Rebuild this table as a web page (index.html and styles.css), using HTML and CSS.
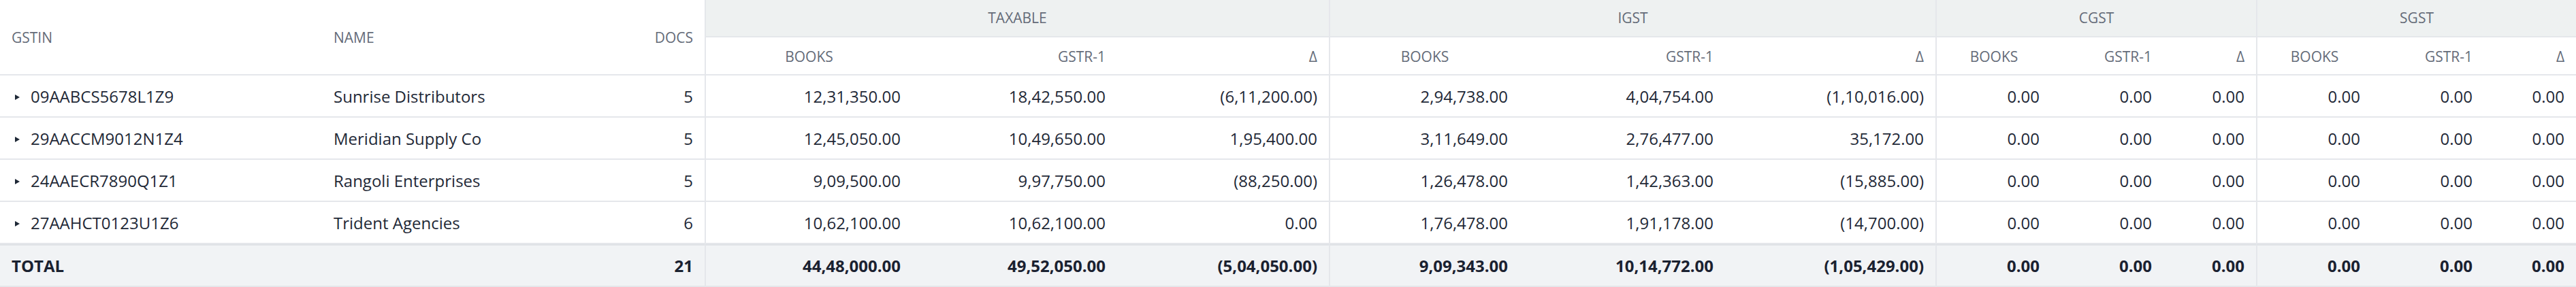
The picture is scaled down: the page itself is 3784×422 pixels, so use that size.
FILE: index.html
```html
<!DOCTYPE html>
<html lang="en">
<head>
<meta charset="utf-8">
<title>GSTR-1 Reconciliation</title>
<link rel="stylesheet" href="styles.css">
</head>
<body>
<table class="recon">
  <colgroup>
    <col class="w-gstin">
    <col class="w-name">
    <col class="w-docs">
    <col class="w-tx1"><col class="w-tx2"><col class="w-tx3">
    <col class="w-ig1"><col class="w-ig2"><col class="w-ig3">
    <col class="w-cg1"><col class="w-cg2"><col class="w-cg3">
    <col class="w-sg1"><col class="w-sg2"><col class="w-sg3">
  </colgroup>
  <thead>
    <tr class="grp-row">
      <th rowspan="2" class="hd left">GSTIN</th>
      <th rowspan="2" class="hd left">NAME</th>
      <th rowspan="2" class="hd right">DOCS</th>
      <th colspan="3" class="grp gs">TAXABLE</th>
      <th colspan="3" class="grp gs">IGST</th>
      <th colspan="3" class="grp gs">CGST</th>
      <th colspan="3" class="grp gs">SGST</th>
    </tr>
    <tr class="sub-row">
      <th class="sub center gs">BOOKS</th><th class="sub right">GSTR-1</th><th class="sub right">Δ</th>
      <th class="sub center gs">BOOKS</th><th class="sub right">GSTR-1</th><th class="sub right">Δ</th>
      <th class="sub center gs">BOOKS</th><th class="sub right">GSTR-1</th><th class="sub right">Δ</th>
      <th class="sub center gs">BOOKS</th><th class="sub right">GSTR-1</th><th class="sub right">Δ</th>
    </tr>
  </thead>
  <tbody>
    <tr>
      <td class="left"><span class="caret"></span>09AABCS5678L1Z9</td>
      <td class="left">Sunrise Distributors</td>
      <td class="right">5</td>
      <td class="right gs">12,31,350.00</td><td class="right">18,42,550.00</td><td class="right">(6,11,200.00)</td>
      <td class="right gs">2,94,738.00</td><td class="right">4,04,754.00</td><td class="right">(1,10,016.00)</td>
      <td class="right gs">0.00</td><td class="right">0.00</td><td class="right">0.00</td>
      <td class="right gs">0.00</td><td class="right">0.00</td><td class="right">0.00</td>
    </tr>
    <tr>
      <td class="left"><span class="caret"></span>29AACCM9012N1Z4</td>
      <td class="left">Meridian Supply Co</td>
      <td class="right">5</td>
      <td class="right gs">12,45,050.00</td><td class="right">10,49,650.00</td><td class="right">1,95,400.00</td>
      <td class="right gs">3,11,649.00</td><td class="right">2,76,477.00</td><td class="right">35,172.00</td>
      <td class="right gs">0.00</td><td class="right">0.00</td><td class="right">0.00</td>
      <td class="right gs">0.00</td><td class="right">0.00</td><td class="right">0.00</td>
    </tr>
    <tr>
      <td class="left"><span class="caret"></span>24AAECR7890Q1Z1</td>
      <td class="left">Rangoli Enterprises</td>
      <td class="right">5</td>
      <td class="right gs">9,09,500.00</td><td class="right">9,97,750.00</td><td class="right">(88,250.00)</td>
      <td class="right gs">1,26,478.00</td><td class="right">1,42,363.00</td><td class="right">(15,885.00)</td>
      <td class="right gs">0.00</td><td class="right">0.00</td><td class="right">0.00</td>
      <td class="right gs">0.00</td><td class="right">0.00</td><td class="right">0.00</td>
    </tr>
    <tr>
      <td class="left"><span class="caret"></span>27AAHCT0123U1Z6</td>
      <td class="left">Trident Agencies</td>
      <td class="right">6</td>
      <td class="right gs">10,62,100.00</td><td class="right">10,62,100.00</td><td class="right">0.00</td>
      <td class="right gs">1,76,478.00</td><td class="right">1,91,178.00</td><td class="right">(14,700.00)</td>
      <td class="right gs">0.00</td><td class="right">0.00</td><td class="right">0.00</td>
      <td class="right gs">0.00</td><td class="right">0.00</td><td class="right">0.00</td>
    </tr>
  </tbody>
  <tfoot>
    <tr class="total">
      <td class="left">TOTAL</td>
      <td class="left"></td>
      <td class="right">21</td>
      <td class="right gs">44,48,000.00</td><td class="right">49,52,050.00</td><td class="right">(5,04,050.00)</td>
      <td class="right gs">9,09,343.00</td><td class="right">10,14,772.00</td><td class="right">(1,05,429.00)</td>
      <td class="right gs">0.00</td><td class="right">0.00</td><td class="right">0.00</td>
      <td class="right gs">0.00</td><td class="right">0.00</td><td class="right">0.00</td>
    </tr>
  </tfoot>
</table>
</body>
</html>
```

FILE: styles.css
```css
* { box-sizing: border-box; }

html, body {
  margin: 0;
  padding: 0;
  background: #ffffff;
}

body {
  font-family: "Open Sans", "Noto Sans", sans-serif;
  color: #1f2937;
}

.recon {
  width: 3784px;
  table-layout: fixed;
  border-collapse: separate;
  border-spacing: 0;
}

.w-gstin { width: 473px; }
.w-name { width: 427px; }
.w-docs { width: 135px; }
.w-tx1 { width: 305px; }
.w-tx2 { width: 301px; }
.w-tx3 { width: 311px; }
.w-ig1 { width: 280px; }
.w-ig2 { width: 302px; }
.w-ig3 { width: 309px; }
.w-cg1 { width: 170px; }
.w-cg2 { width: 165px; }
.w-cg3 { width: 136px; }
.w-sg1 { width: 170px; }
.w-sg2 { width: 165px; }
.w-sg3 { width: 135px; }

th {
  font-weight: 400;
  font-size: 21px;
  color: #646b78;
  text-transform: uppercase;
  white-space: nowrap;
}

.hd {
  vertical-align: middle;
  padding: 0 17px;
  line-height: 30px;
  border-bottom: 2px solid #e5e7eb;
}

.grp {
  background: #eef1f1;
  text-align: center;
  line-height: 29px;
  padding: 12px 17px;
  border-bottom: 2px solid #e5e7eb;
}

.sub {
  line-height: 30px;
  padding: 13px 17px 11px;
  border-bottom: 2px solid #e5e7eb;
  background: #ffffff;
}

td {
  font-size: 24px;
  line-height: 32px;
  padding: 15px 17px 13px;
  border-bottom: 2px solid #e5e7eb;
  white-space: nowrap;
  overflow: hidden;
}

.left { text-align: left; }
.right { text-align: right; }
.center { text-align: center; }

.gs { border-left: 2px solid #e5e7eb; }

.caret {
  display: inline-block;
  width: 0;
  height: 0;
  margin: 0 16px 0 5px;
  border-left: 7px solid #1f2937;
  border-top: 4.5px solid transparent;
  border-bottom: 4.5px solid transparent;
  vertical-align: 4px;
}

.total td {
  background: #f1f3f5;
  font-weight: 700;
  color: #1a2130;
  padding: 14px 17px 13px;
  border-top: 2px solid #dfe2e6;
}
```
